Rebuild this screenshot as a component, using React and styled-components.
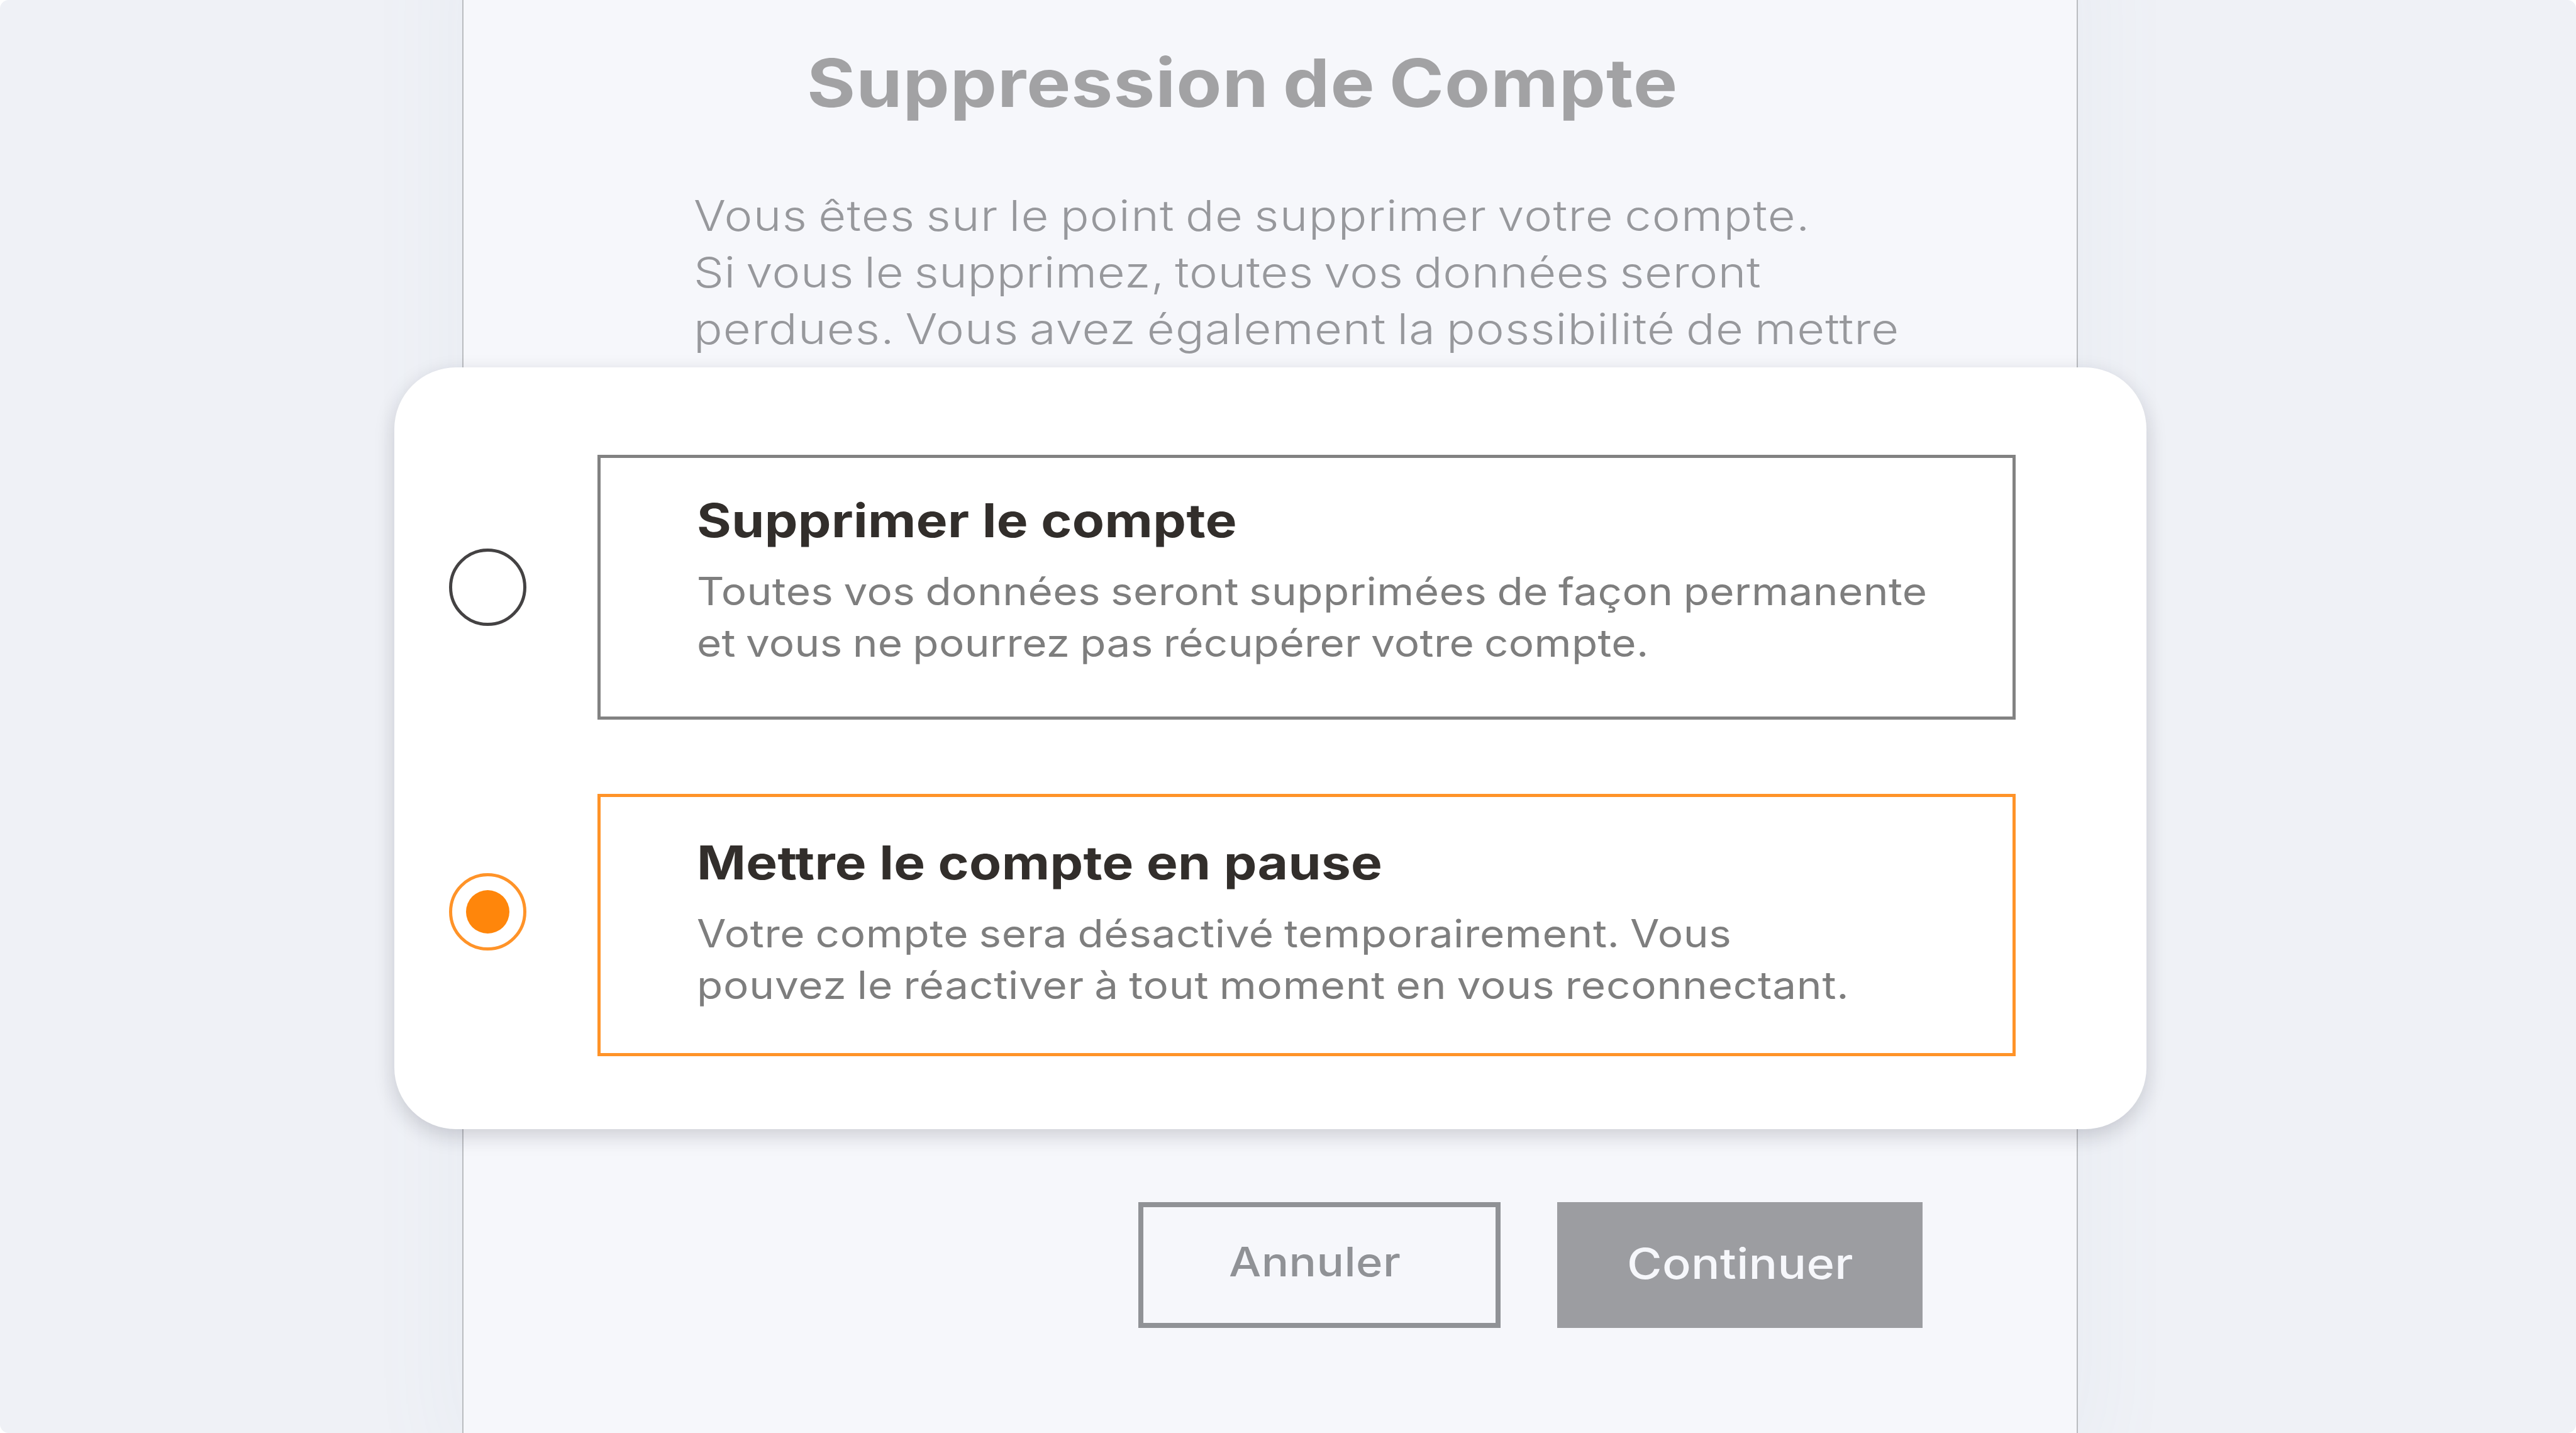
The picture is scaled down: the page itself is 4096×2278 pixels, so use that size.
import React, { useState } from "react";
import styled, { createGlobalStyle } from "styled-components";

const options = [
  {
    id: "delete",
    title: { text: "Supprimer le compte", spacing: 0.32 },
    lines: [
      {
        text: "Toutes vos données seront supprimées de façon permanente",
        spacing: 0.38,
      },
      { text: "et vous ne pourrez pas récupérer votre compte.", spacing: 0.28 },
    ],
  },
  {
    id: "pause",
    title: { text: "Mettre le compte en pause", spacing: 0.27 },
    lines: [
      {
        text: "Votre compte sera désactivé temporairement. Vous",
        spacing: 0.56,
      },
      {
        text: "pouvez le réactiver à tout moment en vous reconnectant.",
        spacing: 0.71,
      },
    ],
  },
];

const App = () => {
  const [selected, setSelected] = useState("pause");

  return (
    <Page>
      <GlobalStyle />
      <Panel>
        <Title>
          <Wide $stretch={1.11} $spacing={0.88}>
            Suppression de Compte
          </Wide>
        </Title>
        <Intro>
          <Wide $stretch={1.12} $spacing={1.18}>
            Vous êtes sur le point de supprimer votre compte.
          </Wide>
          <Wide $stretch={1.12} $spacing={0.55}>
            Si vous le supprimez, toutes vos données seront
          </Wide>
          <Wide $stretch={1.12} $spacing={1.05}>
            perdues. Vous avez également la possibilité de mettre
          </Wide>
        </Intro>
        <Actions>
          <CancelButton>
            <Wide $stretch={1.13} $spacing={0.37}>
              Annuler
            </Wide>
          </CancelButton>
          <ContinueButton>
            <Wide $stretch={1.13} $spacing={0.3}>
              Continuer
            </Wide>
          </ContinueButton>
        </Actions>
      </Panel>

      <Dialog role="radiogroup">
        {options.map(({ id, title, lines }) => {
          const active = id === selected;
          return (
            <Option
              key={id}
              role="radio"
              aria-checked={active}
              onClick={() => setSelected(id)}
            >
              <Radio $active={active}>{active && <Dot />}</Radio>
              <OptionCard $active={active}>
                <OptionTitle>
                  <Wide $stretch={1.13} $spacing={title.spacing}>
                    {title.text}
                  </Wide>
                </OptionTitle>
                <OptionText>
                  {lines.map((line) => (
                    <Wide
                      key={line.text}
                      $stretch={1.1}
                      $spacing={line.spacing}
                    >
                      {line.text}
                    </Wide>
                  ))}
                </OptionText>
              </OptionCard>
            </Option>
          );
        })}
      </Dialog>
    </Page>
  );
};

export default App;

const GlobalStyle = createGlobalStyle`
  * {
    box-sizing: border-box;
  }

  body {
    margin: 0;
    background: #fff;
    font-family: "Inter", "Liberation Sans", sans-serif;
  }
`;

const Page = styled.div`
  position: relative;
  width: 4096px;
  height: 2278px;
  overflow: hidden;
  border-radius: 14px;
  background: #eff1f6;
`;

/* runs past the top and bottom of the page, so its shadow does too */
const Panel = styled.main`
  display: flex;
  flex-direction: column;
  width: 2569px;
  height: 2488px;
  margin: -150px 0 0 735px;
  padding: 217px 0 227px;
  border: solid #babcc0;
  border-width: 0 2px;
  background: #f6f7fb;
  box-shadow: 0 0 160px rgba(120, 145, 190, 0.06);
`;

/* one line of type, drawn a little wider than the font's own shapes */
const Wide = styled.span`
  display: block;
  white-space: nowrap;
  letter-spacing: ${(props) => props.$spacing}px;
  transform: scaleX(${(props) => props.$stretch});
  transform-origin: left;
`;

const Title = styled.h1`
  margin: 0 0 100px 546px;
  font-size: 106.2px;
  font-weight: 700;
  line-height: 130px;
  word-spacing: -6px;
  color: #a2a2a4;
`;

const Intro = styled.div`
  margin-left: 366px;
  font-size: 67.7px;
  font-weight: 300;
  line-height: 90.1px;
  word-spacing: -5px;
  color: #97989c;
`;

const Actions = styled.div`
  display: flex;
  gap: 90px;
  margin: auto 0 0 1073px;
`;

const Button = styled.button`
  display: flex;
  align-items: center;
  height: 200px;
  border: 0;
  border-radius: 0;
  background: none;
  font-family: inherit;
  font-weight: 500;
`;

const CancelButton = styled(Button)`
  width: 576px;
  padding: 0 0 12px 136px;
  border: 8px solid #909296;
  font-size: 64px;
  color: #909296;
`;

const ContinueButton = styled(Button)`
  width: 581px;
  padding: 0 0 6px 111px;
  background: #9c9da1;
  font-size: 67.1px;
  color: #f6f7fb;
`;

const Dialog = styled.section`
  position: absolute;
  top: 584px;
  left: 627px;
  display: flex;
  flex-direction: column;
  gap: 118px;
  width: 2786px;
  height: 1211px;
  padding: 139px 0 0 87px;
  border-radius: 98px;
  background: #fff;
  box-shadow: 0 11px 32px rgba(20, 24, 40, 0.18);
`;

const Option = styled.div`
  display: flex;
  align-items: center;
  gap: 113px;
`;

const Radio = styled.span`
  display: flex;
  align-items: center;
  justify-content: center;
  width: 123px;
  height: 123px;
  margin-bottom: ${(props) => (props.$active ? 42 : 0)}px;
  border: 5px solid ${(props) => (props.$active ? "#ff9328" : "#444243")};
  border-radius: 50%;
`;

const Dot = styled.span`
  width: 69px;
  height: 69px;
  border-radius: 50%;
  background: #ff860b;
`;

const OptionCard = styled.div`
  width: 2255px;
  height: ${(props) => (props.$active ? 417 : 421)}px;
  padding: ${(props) => (props.$active ? 59 : 54)}px 0 0 153px;
  border: 5px solid ${(props) => (props.$active ? "#ff9328" : "#828282")};
`;

const OptionTitle = styled.h2`
  margin: 0 0 28px;
  font-size: 74.1px;
  font-weight: 700;
  line-height: 90px;
  color: #322e2b;
`;

const OptionText = styled.div`
  font-size: 61.3px;
  line-height: 81.8px;
  word-spacing: -3px;
  color: #7e7e7e;
`;
